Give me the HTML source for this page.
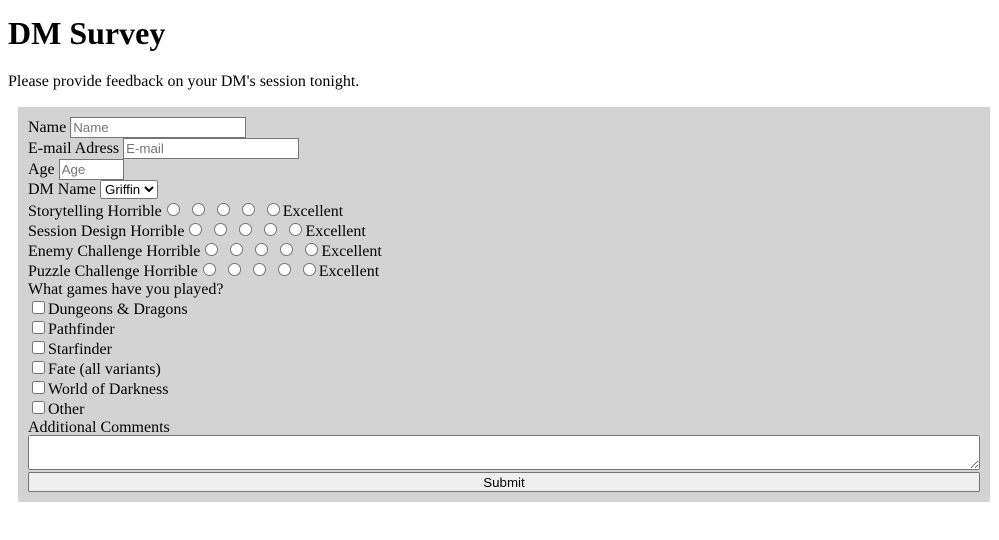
<!DOCTYPE html>
<html><head><style>
body{margin:8px;font-family:"Liberation Serif",serif;font-size:16px;color:#000;background:#fff}
h1{font-size:32px;margin:15px 0 21px;line-height:37px}
p{margin:16px 0}
form{background:#d3d3d3;margin:0 1px 0 10px;padding:10px}
input[type=text]{font-family:"Liberation Sans",sans-serif;font-size:13.3px;border:1px solid #767676;padding:1px 2px;height:17px;box-sizing:content-box;background:#fff;margin:0}
select{font-family:"Liberation Sans",sans-serif;font-size:13.3px;height:19px;margin:0 0 2px}
input[type=radio]{margin:2px 3px 0 5px;width:13px;height:13px}
input[type=checkbox]{margin:2px 3px 2px 4px;width:13px;height:13px}
textarea{width:100%;box-sizing:border-box;height:35px;display:block;margin:-2px 0 2px}
button{width:100%;font-family:"Liberation Sans",sans-serif;font-size:13.3px;height:20px;border:1px solid #767676;background:#efefef;border-radius:2px;display:block;padding:0}
</style></head><body>
<h1>DM Survey</h1>
<p>Please provide feedback on your DM's session tonight.</p>
<form>
<label>Name <input type="text" placeholder="Name" style="width:170px"></label><br>
<label>E-mail Adress <input type="text" placeholder="E-mail" style="width:170px"></label><br>
<label>Age <input type="text" placeholder="Age" style="width:59px"></label><br>
DM Name <select><option>Griffin</option></select><br>
Storytelling Horrible<input type="radio"> <input type="radio"> <input type="radio"> <input type="radio"> <input type="radio">Excellent<br>
Session Design Horrible<input type="radio"> <input type="radio"> <input type="radio"> <input type="radio"> <input type="radio">Excellent<br>
Enemy Challenge Horrible<input type="radio"> <input type="radio"> <input type="radio"> <input type="radio"> <input type="radio">Excellent<br>
Puzzle Challenge Horrible<input type="radio"> <input type="radio"> <input type="radio"> <input type="radio"> <input type="radio">Excellent<br>
What games have you played?<br>
<input type="checkbox">Dungeons &amp; Dragons<br>
<input type="checkbox">Pathfinder<br>
<input type="checkbox">Starfinder<br>
<input type="checkbox">Fate (all variants)<br>
<input type="checkbox">World of Darkness<br>
<input type="checkbox">Other<br>
Additional Comments<br>
<textarea></textarea>
<button type="button">Submit</button>
</form>
</body></html>
